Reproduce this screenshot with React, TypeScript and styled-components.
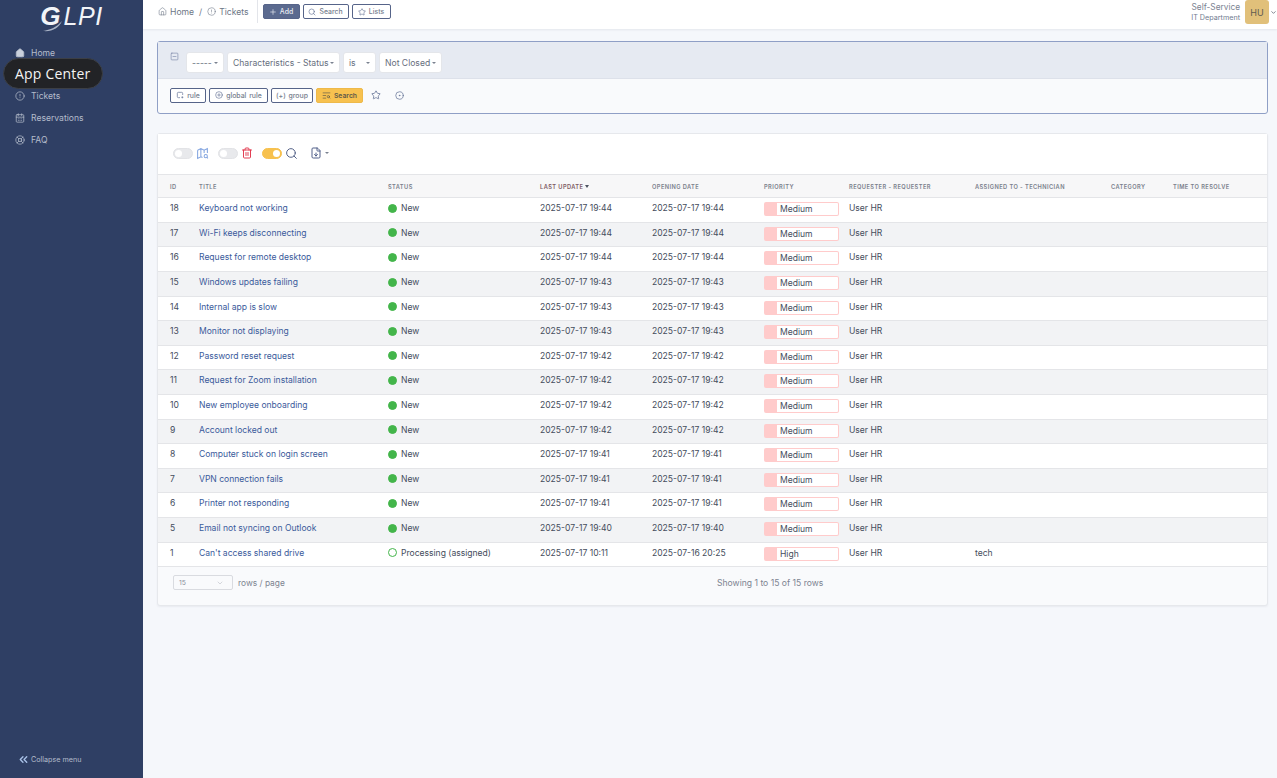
import React from "react";
import styled, { createGlobalStyle } from "styled-components";
import {
  ChevronDown,
  ChevronsLeft,
  CircleAlert,
  CalendarDays,
  CirclePlus,
  CircleDot,
  FileDown,
  House,
  LifeBuoy,
  Plus,
  Search,
  SquareMinus,
  Star,
  TextSearch,
  Trash2,
} from "lucide-react";

const GlobalStyle = createGlobalStyle`
  html, body { margin: 0; padding: 0; height: 100%; }
  body { font-family: Inter, "Liberation Sans", sans-serif; background: #f5f7fb; color: #2c3547; }
`;

const Page = styled.div`
  display: flex;
  width: 100%;
  min-height: 778px;
`;

const Sidebar = styled.aside`
  width: 143px;
  flex: none;
  height: 778px;
  background: #2f3f64;
  display: flex;
  flex-direction: column;
`;

const LogoRow = styled.div`
  height: 41px;
  display: flex;
  align-items: flex-start;
  justify-content: center;
  position: relative;
`;

const LogoText = styled.span`
  font-family: "Liberation Sans", sans-serif;
  font-style: italic;
  font-size: 25px;
  line-height: 30px;
  color: #f2f4f8;
  letter-spacing: 0.6px;
  margin-top: 1px;
  b {
    font-weight: 700;
    font-size: 26px;
    letter-spacing: 3px;
  }
`;

const Swoosh = styled.svg`
  position: absolute;
  left: 42px;
  top: 20px;
`;

const Nav = styled.nav`
  display: flex;
  flex-direction: column;
`;

const NavItem = styled.div`
  position: relative;
  height: 22px;
  box-sizing: border-box;
  display: flex;
  align-items: center;
  gap: 6px;
  padding-left: 15px;
  font-size: 8.6px;
  color: #b4bccb;
  svg { flex: none; }
  &:first-child { padding-top: 2px; }
`;

const AppPill = styled.div`
  position: absolute;
  left: 3px;
  top: -5px;
  width: 100px;
  height: 31px;
  box-sizing: border-box;
  border: 1px solid #3c3f45;
  border-radius: 16px;
  background: #222326;
  color: #f4f4f4;
  font-family: "Open Sans", sans-serif;
  font-size: 14px;
  letter-spacing: 0.2px;
  display: flex;
  align-items: center;
  padding-left: 11px;
`;

const Collapse = styled.div`
  margin-top: auto;
  height: 38px;
  display: flex;
  align-items: center;
  gap: 1px;
  padding-left: 17px;
  font-size: 7.2px;
  color: #b4bccb;
  svg { color: #a9c2e8; }
`;

const Main = styled.main`
  flex: 1;
  min-width: 0;
  display: flex;
  flex-direction: column;
`;

const Header = styled.header`
  height: 29px;
  background: #fff;
  box-shadow: 0 1px 2px rgba(30, 40, 70, 0.08);
  display: flex;
  align-items: flex-start;
  padding-left: 15px;
`;

const Crumbs = styled.div`
  height: 23px;
  display: flex;
  align-items: center;
  gap: 3px;
  font-size: 8.6px;
  color: #6d7686;
  padding-right: 8px;
  border-right: 1px solid #e3e5ea;
  margin-right: 5px;
`;

const Slash = styled.span`
  margin: 0 2px;
`;

const HeadButtons = styled.div`
  display: flex;
  gap: 3px;
  padding-top: 4px;
`;

const OutlineBtn = styled.div<{ $filled?: boolean; $wide: number }>`
  width: ${(p) => p.$wide}px;
  height: 15px;
  box-sizing: border-box;
  display: flex;
  align-items: center;
  justify-content: center;
  gap: 3px;
  border-radius: 2px;
  border: 1px solid #566489;
  background: ${(p) => (p.$filled ? "#5b6a8f" : "#fff")};
  color: ${(p) => (p.$filled ? "#e8ebf2" : "#767e8e")};
  font-size: 6.9px;
  font-weight: 500;
  white-space: nowrap;
  word-spacing: 1px;
  svg { color: ${(p) => (p.$filled ? "#e8ebf2" : "#5b6a8f")}; }
`;

const UserBox = styled.div`
  margin-left: auto;
  display: flex;
  align-items: flex-start;
  gap: 5px;
`;

const UserText = styled.div`
  display: flex;
  flex-direction: column;
  align-items: flex-end;
  padding-top: 2px;
  font-size: 8.3px;
  line-height: 10px;
  color: #7a8291;
  small {
    font-size: 7.2px;
    line-height: 11px;
    color: #717b8f;
  }
`;

const Avatar = styled.div`
  width: 24px;
  height: 24px;
  border-radius: 3px;
  background: #e1c07a;
  color: #5f5a50;
  font-size: 9px;
  display: flex;
  align-items: center;
  justify-content: center;
`;

const UserCaret = styled(ChevronDown)`
  margin: 9px 0 0 -4px;
  color: #555c6b;
`;

const Content = styled.div`
  padding: 12px 9px 0 14px;
  display: flex;
  flex-direction: column;
  gap: 19px;
`;

const SearchCard = styled.section`
  height: 73px;
  box-sizing: border-box;
  border: 1px solid #8f9fc6;
  border-radius: 3px;
  background: #f9fafc;
  display: flex;
  flex-direction: column;
`;

const CriteriaRow = styled.div`
  height: 36px;
  background: #e6eaf2;
  border-bottom: 1px solid #dde1ea;
  display: flex;
  align-items: center;
  padding-left: 12px;
  gap: 3px;
  svg.toggle {
    color: #6b7a9e;
    margin-right: 4px;
    margin-top: -8px;
  }
`;

const Dropdown = styled.div<{ $width: number }>`
  width: ${(p) => p.$width}px;
  height: 21px;
  margin-top: 5px;
  box-sizing: border-box;
  background: #fff;
  border: 1px solid #e4e6ea;
  border-radius: 3px;
  display: flex;
  align-items: center;
  justify-content: space-between;
  padding: 0 5px;
  font-size: 8.6px;
  color: #666e7d;
  white-space: nowrap;
`;

const Caret = styled.span`
  width: 0;
  height: 0;
  flex: none;
  border-left: 2px solid transparent;
  border-right: 2px solid transparent;
  border-top: 2.5px solid #7b8290;
`;

const ActionRow = styled.div`
  flex: 1;
  display: flex;
  align-items: center;
  padding: 0 0 2px 12px;
  gap: 3px;
`;

const SearchBtn = styled.div`
  height: 15px;
  width: 47px;
  box-sizing: border-box;
  display: flex;
  align-items: center;
  justify-content: center;
  gap: 3px;
  border-radius: 2px;
  background: #f7c14f;
  border: 1px solid #eeb94a;
  color: #5f5a48;
  font-size: 6.8px;
  font-weight: 600;
`;

const PlainIcon = styled.span`
  width: 20px;
  display: flex;
  justify-content: center;
  color: #5b6a8f;
`;

const ListCard = styled.section`
  height: 473px;
  background: #f9fafc;
  border: 1px solid #e6e8ec;
  border-radius: 3px;
  box-sizing: border-box;
  box-shadow: 0 1px 2px rgba(30, 40, 70, 0.06);
  display: flex;
  flex-direction: column;
`;

const Toolbar = styled.div`
  height: 40px;
  box-sizing: border-box;
  background: #fff;
  display: flex;
  align-items: center;
  padding: 0 0 2px 15px;
`;

const Toggle = styled.span<{ $on?: boolean }>`
  width: 20px;
  height: 11px;
  box-sizing: border-box;
  border-radius: 6px;
  border: 1px solid ${(p) => (p.$on ? "#f7c14f" : "#e2e3e6")};
  background: ${(p) => (p.$on ? "#f7c14f" : "#e8e9ec")};
  display: flex;
  align-items: center;
  justify-content: ${(p) => (p.$on ? "flex-end" : "flex-start")};
  padding: 0 1px;
  &::after {
    content: "";
    width: 7px;
    height: 7px;
    border-radius: 50%;
    background: #fff;
  }
`;

const ToolGroup = styled.div<{ $gap: number }>`
  display: flex;
  align-items: center;
  gap: 3px;
  margin-right: ${(p) => p.$gap}px;
`;

const Table = styled.table`
  width: 100%;
  border-collapse: collapse;
  table-layout: fixed;
`;

const HeadCell = styled.th<{ $sorted?: boolean }>`
  height: 23.3px;
  padding: 0 0 0 12px;
  box-sizing: border-box;
  text-align: left;
  font-size: 5.7px;
  font-weight: 600;
  letter-spacing: 0.42px;
  text-transform: uppercase;
  white-space: nowrap;
  background: #f7f7f8;
  border-top: 1px solid #e4e5e8;
  border-bottom: 1px solid #e4e5e8;
  color: ${(p) => (p.$sorted ? "#7c5a63" : "#7a808c")};
`;

const SortArrow = styled.span`
  display: inline-block;
  vertical-align: 1px;
  margin-left: 2px;
  border-left: 2.5px solid transparent;
  border-right: 2.5px solid transparent;
  border-top: 3px solid #4d5361;
`;

const Row = styled.tr<{ $odd: boolean }>`
  height: 24.6px;
  background: ${(p) => (p.$odd ? "#fff" : "#f2f3f5")};
  border-bottom: 1px solid #e4e5e8;
`;

const Cell = styled.td`
  padding: 5px 0 0 12px;
  vertical-align: top;
  font-size: 8.55px;
  line-height: 10px;
  color: #444c5c;
  white-space: nowrap;
`;

const TitleLink = styled.a`
  color: #3a5a9b;
`;

const StatusWrap = styled.span`
  display: flex;
  align-items: center;
  gap: 4px;
`;

const StatusDot = styled.span<{ $hollow?: boolean }>`
  width: 9px;
  height: 9px;
  box-sizing: border-box;
  border-radius: 50%;
  border: 1px solid #43b54a;
  background: ${(p) => (p.$hollow ? "transparent" : "#43b54a")};
`;

const PriorityBar = styled.div`
  width: 75px;
  height: 14px;
  box-sizing: border-box;
  margin-top: -1px;
  border: 1px solid #ffcbcb;
  border-left-width: 13px;
  border-radius: 2px;
  background: #fff;
  padding-left: 3px;
  line-height: 13px;
  color: #444c5c;
`;

const Footer = styled.div`
  flex: 1;
  display: grid;
  grid-template-columns: 544px auto;
  align-items: start;
  padding: 8px 0 0 15px;
  font-size: 8.6px;
  color: #7d8491;
`;

const PerPage = styled.div`
  display: flex;
  align-items: center;
  gap: 5px;
  font-size: 8.4px;
`;

const PageSelect = styled.div`
  width: 60px;
  height: 15px;
  box-sizing: border-box;
  border: 1px solid #d9dbe0;
  border-radius: 2px;
  display: flex;
  align-items: center;
  justify-content: space-between;
  padding: 0 8px 0 5px;
  font-size: 6.8px;
  color: #8a909c;
`;

const ShowingText = styled.div`
  padding-top: 3px;
`;

type Ticket = {
  id: number;
  title: string;
  updated: string;
  opened: string;
  status?: string;
  priority?: string;
  tech?: string;
};

const tickets: Ticket[] = [
  { id: 18, title: "Keyboard not working", updated: "2025-07-17 19:44", opened: "2025-07-17 19:44" },
  { id: 17, title: "Wi-Fi keeps disconnecting", updated: "2025-07-17 19:44", opened: "2025-07-17 19:44" },
  { id: 16, title: "Request for remote desktop", updated: "2025-07-17 19:44", opened: "2025-07-17 19:44" },
  { id: 15, title: "Windows updates failing", updated: "2025-07-17 19:43", opened: "2025-07-17 19:43" },
  { id: 14, title: "Internal app is slow", updated: "2025-07-17 19:43", opened: "2025-07-17 19:43" },
  { id: 13, title: "Monitor not displaying", updated: "2025-07-17 19:43", opened: "2025-07-17 19:43" },
  { id: 12, title: "Password reset request", updated: "2025-07-17 19:42", opened: "2025-07-17 19:42" },
  { id: 11, title: "Request for Zoom installation", updated: "2025-07-17 19:42", opened: "2025-07-17 19:42" },
  { id: 10, title: "New employee onboarding", updated: "2025-07-17 19:42", opened: "2025-07-17 19:42" },
  { id: 9, title: "Account locked out", updated: "2025-07-17 19:42", opened: "2025-07-17 19:42" },
  { id: 8, title: "Computer stuck on login screen", updated: "2025-07-17 19:41", opened: "2025-07-17 19:41" },
  { id: 7, title: "VPN connection fails", updated: "2025-07-17 19:41", opened: "2025-07-17 19:41" },
  { id: 6, title: "Printer not responding", updated: "2025-07-17 19:41", opened: "2025-07-17 19:41" },
  { id: 5, title: "Email not syncing on Outlook", updated: "2025-07-17 19:40", opened: "2025-07-17 19:40" },
  {
    id: 1,
    title: "Can't access shared drive",
    updated: "2025-07-17 10:11",
    opened: "2025-07-16 20:25",
    status: "Processing (assigned)",
    priority: "High",
    tech: "tech",
  },
];

const columns = [
  { label: "ID", width: 29 },
  { label: "Title", width: 189 },
  { label: "Status", width: 152 },
  { label: "Last update", width: 112 },
  { label: "Opening date", width: 112 },
  { label: "Priority", width: 85 },
  { label: "Requester - Requester", width: 126 },
  { label: "Assigned to - Technician", width: 136 },
  { label: "Category", width: 62 },
  { label: "Time to resolve", width: 106 },
];

const RuleIcon = () => (
  <svg width="8" height="8" viewBox="0 0 24 24" fill="none" stroke="currentColor" strokeWidth="2">
    <path d="M12 20H7a3 3 0 0 1-3-3V7a3 3 0 0 1 3-3h10a3 3 0 0 1 3 3v5" />
    <path d="M16 19h6M19 16v6" />
  </svg>
);

const MapSearchIcon = () => (
  <svg width="13" height="13" viewBox="0 0 24 24" fill="none" stroke="#83a5e0" strokeWidth="1.9">
    <path d="M3 6l6-3 6 3 6-3v8M3 6v15l6-3 3 1.5M9 3v15M15 6v5" />
    <circle cx="18" cy="17" r="3" />
    <path d="M20.2 19.2L22 21" />
  </svg>
);

const App: React.FC = () => {
  return (
    <Page>
      <GlobalStyle />
      <Sidebar>
        <LogoRow>
          <LogoText>
            <b>G</b>LPI
          </LogoText>
          <Swoosh width="22" height="12" viewBox="0 0 22 12">
            <path d="M1 11 C8 10 15 7 20 1 C17 8 10 12 1 11 Z" fill="#a9b3c6" />
          </Swoosh>
        </LogoRow>
        <Nav>
          <NavItem>
            <House size={10} fill="#c9d0dc" strokeWidth={1.8} />
            Home
          </NavItem>
          <NavItem>
            <AppPill>App Center</AppPill>
          </NavItem>
          <NavItem>
            <CircleAlert size={10} strokeWidth={1.8} />
            Tickets
          </NavItem>
          <NavItem>
            <CalendarDays size={10} strokeWidth={1.8} />
            Reservations
          </NavItem>
          <NavItem>
            <LifeBuoy size={10} strokeWidth={1.8} />
            FAQ
          </NavItem>
        </Nav>
        <Collapse>
          <ChevronsLeft size={13} strokeWidth={2.5} />
          Collapse menu
        </Collapse>
      </Sidebar>
      <Main>
        <Header>
          <Crumbs>
            <House size={9} strokeWidth={1.5} />
            Home
            <Slash>/</Slash>
            <CircleAlert size={9} strokeWidth={1.5} />
            Tickets
          </Crumbs>
          <HeadButtons>
            <OutlineBtn $filled $wide={37}>
              <Plus size={8} strokeWidth={2} />
              Add
            </OutlineBtn>
            <OutlineBtn $wide={46}>
              <Search size={8} strokeWidth={1.8} />
              Search
            </OutlineBtn>
            <OutlineBtn $wide={39}>
              <Star size={8} strokeWidth={1.8} />
              Lists
            </OutlineBtn>
          </HeadButtons>
          <UserBox>
            <UserText>
              Self-Service
              <small>IT Department</small>
            </UserText>
            <Avatar>HU</Avatar>
            <UserCaret size={7} strokeWidth={2.5} />
          </UserBox>
        </Header>
        <Content>
          <SearchCard>
            <CriteriaRow>
              <SquareMinus className="toggle" size={9} strokeWidth={1.5} />
              <Dropdown $width={38}>
                ----- <Caret />
              </Dropdown>
              <Dropdown $width={113}>
                Characteristics - Status <Caret />
              </Dropdown>
              <Dropdown $width={33}>
                is <Caret />
              </Dropdown>
              <Dropdown $width={63}>
                Not Closed <Caret />
              </Dropdown>
            </CriteriaRow>
            <ActionRow>
              <OutlineBtn $wide={36}>
                <RuleIcon />
                rule
              </OutlineBtn>
              <OutlineBtn $wide={59}>
                <CirclePlus size={8} strokeWidth={1.8} />
                global rule
              </OutlineBtn>
              <OutlineBtn $wide={42}>(+) group</OutlineBtn>
              <SearchBtn>
                <TextSearch size={9} strokeWidth={1.8} />
                Search
              </SearchBtn>
              <PlainIcon>
                <Star size={10} strokeWidth={1.8} />
              </PlainIcon>
              <PlainIcon>
                <CircleDot size={9} strokeWidth={1.8} />
              </PlainIcon>
            </ActionRow>
          </SearchCard>
          <ListCard>
            <Toolbar>
              <ToolGroup $gap={9}>
                <Toggle />
                <MapSearchIcon />
              </ToolGroup>
              <ToolGroup $gap={9}>
                <Toggle />
                <Trash2 size={12} strokeWidth={1.9} color="#e0354a" />
              </ToolGroup>
              <ToolGroup $gap={12}>
                <Toggle $on />
                <Search size={13} strokeWidth={1.8} color="#4f5e85" />
              </ToolGroup>
              <ToolGroup $gap={0}>
                <FileDown size={12} strokeWidth={1.9} color="#4a5a85" />
                <Caret />
              </ToolGroup>
            </Toolbar>
            <Table>
              <colgroup>
                {columns.map((c) => (
                  <col key={c.label} style={{ width: c.width }} />
                ))}
              </colgroup>
              <thead>
                <tr>
                  {columns.map((c) =>
                    c.label === "Last update" ? (
                      <HeadCell key={c.label} $sorted>
                        {c.label}
                        <SortArrow />
                      </HeadCell>
                    ) : (
                      <HeadCell key={c.label}>{c.label}</HeadCell>
                    )
                  )}
                </tr>
              </thead>
              <tbody>
                {tickets.map((t, i) => (
                  <Row key={t.id} $odd={i % 2 === 0}>
                    <Cell>{t.id}</Cell>
                    <Cell>
                      <TitleLink>{t.title}</TitleLink>
                    </Cell>
                    <Cell>
                      <StatusWrap>
                        <StatusDot $hollow={!!t.status} />
                        {t.status || "New"}
                      </StatusWrap>
                    </Cell>
                    <Cell>{t.updated}</Cell>
                    <Cell>{t.opened}</Cell>
                    <Cell>
                      <PriorityBar>{t.priority || "Medium"}</PriorityBar>
                    </Cell>
                    <Cell>User HR</Cell>
                    <Cell>{t.tech}</Cell>
                    <Cell />
                    <Cell />
                  </Row>
                ))}
              </tbody>
            </Table>
            <Footer>
              <PerPage>
                <PageSelect>
                  15
                  <ChevronDown size={8} strokeWidth={1} />
                </PageSelect>
                rows / page
              </PerPage>
              <ShowingText>Showing 1 to 15 of 15 rows</ShowingText>
            </Footer>
          </ListCard>
        </Content>
      </Main>
    </Page>
  );
};

export default App;
